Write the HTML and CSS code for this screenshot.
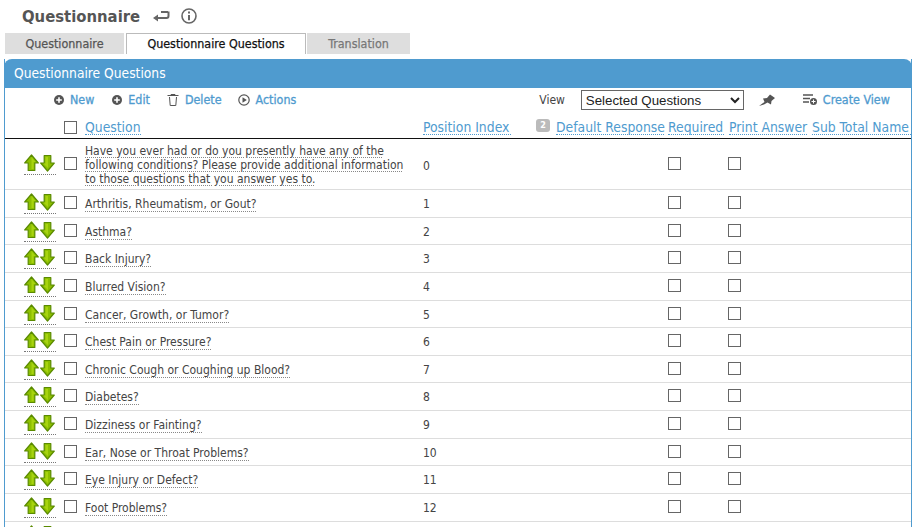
FILE: index.html
```html
<!DOCTYPE html>
<html lang="en">
<head>
<meta charset="utf-8">
<title>Questionnaire</title>
<link rel="stylesheet" href="styles.css">
</head>
<body>
<svg class="defs" width="0" height="0" aria-hidden="true">
  <symbol id="up" viewBox="0 0 15 18"><path d="M7.5 1 14.3 9H10.8V16.5H4.2V9H.7Z" fill="#8cbf00" stroke="#5a8a00" stroke-width="1.2" stroke-linejoin="round"/><path d="M7.5 3 11.5 8H9.6V15H7.5Z" fill="#a8d410"/></symbol>
  <symbol id="down" viewBox="0 0 15 18"><path d="M4.2 1.5H10.8V9H14.3L7.5 17 .7 9H4.2Z" fill="#8cbf00" stroke="#5a8a00" stroke-width="1.2" stroke-linejoin="round"/><path d="M5.5 3H8V14L3.5 9.5H5.5Z" fill="#a8d410"/></symbol>
  <symbol id="plus" viewBox="0 0 10 10"><circle cx="5" cy="5" r="5" fill="#555"/><path d="M5 2.2V7.8M2.2 5H7.8" stroke="#fff" stroke-width="1.6"/></symbol>
</svg>
<header class="title-row">
  <h1 class="title">Questionnaire</h1>
  <svg class="icon-back" width="17" height="13" viewBox="0 0 17 13"><path d="M15.5 1.5V6a2 2 0 0 1-2 2H3" fill="none" stroke="#666" stroke-width="2"/><path d="M0 8 5 4.5V11.5Z" fill="#666"/><path d="M8 2H15" stroke="#666" stroke-width="2"/></svg>
  <svg class="icon-info" width="16" height="16" viewBox="0 0 16 16"><circle cx="8" cy="8" r="7" fill="none" stroke="#666" stroke-width="1.6"/><path d="M8 7V12.2M8 3.6V5.4" stroke="#666" stroke-width="2"/></svg>
</header>
<nav class="tabs">
  <span class="tab tab-first">Questionnaire</span>
  <span class="tab tab-active">Questionnaire Questions</span>
  <span class="tab tab-last">Translation</span>
</nav>
<main class="panel">
  <div class="panel-head">Questionnaire Questions</div>
  <div class="toolbar">
    <a class="tool tool-new"><svg width="10" height="10"><use href="#plus"/></svg>New</a>
    <a class="tool tool-edit"><svg width="10" height="10"><use href="#plus"/></svg>Edit</a>
    <a class="tool tool-delete"><svg width="12" height="12" viewBox="0 0 12 12"><path d="M.5 1.5H11.5M4 1.5V.5H8V1.5M2.5 3 3.2 11.5H8.8L9.5 3" fill="none" stroke="#555"/></svg>Delete</a>
    <a class="tool tool-actions"><svg width="12" height="12" viewBox="0 0 12 12"><circle cx="6" cy="6" r="5.2" fill="none" stroke="#555" stroke-width="1.2"/><path d="M4.5 3.2 8.8 6 4.5 8.8Z" fill="#555"/></svg>Actions</a>
    <span class="view-label">View</span>
    <select class="view-select"><option>Selected Questions</option></select>
    <svg class="pin" width="18" height="14" viewBox="0 0 18 14"><path d="M1 13 6.5 9 5 5.5 9 5 12 1.5 17 5 13.5 8 13 11.5 9.5 9.5 6 11.5Z" fill="#555"/></svg>
    <a class="tool tool-create"><svg width="14" height="11" viewBox="0 0 14 11"><path d="M0 1H10M0 4.5H7M0 8H6" stroke="#555" stroke-width="1.6"/><circle cx="10.5" cy="7.5" r="3.5" fill="#555"/><path d="M10.5 5.5V9.5M8.5 7.5H12.5" stroke="#fff"/></svg>Create View</a>
  </div>
  <div class="table-head">
    <span class="box head-box"></span>
    <a class="col-link col-question">Question</a>
    <a class="col-link col-index">Position Index</a>
    <span class="badge">2</span>
    <a class="col-link col-default">Default Response</a>
    <a class="col-link col-required">Required</a>
    <a class="col-link col-print">Print Answer</a>
    <a class="col-link col-sub">Sub Total Name</a>
  </div>
  <div class="rows">
    <div class="row row-tall"><span class="arrows"><svg width="15" height="18"><use href="#up"/></svg><svg width="15" height="18"><use href="#down"/></svg></span><span class="box"></span><span class="question q-long">Have you ever had or do you presently have any of the following conditions? Please provide additional information to those questions that you answer yes to.</span><span class="pos">0</span><span class="box req"></span><span class="box prn"></span></div>
    <div class="row"><span class="arrows"><svg width="15" height="18"><use href="#up"/></svg><svg width="15" height="18"><use href="#down"/></svg></span><span class="box"></span><span class="question">Arthritis, Rheumatism, or Gout?</span><span class="pos">1</span><span class="box req"></span><span class="box prn"></span></div>
    <div class="row"><span class="arrows"><svg width="15" height="18"><use href="#up"/></svg><svg width="15" height="18"><use href="#down"/></svg></span><span class="box"></span><span class="question">Asthma?</span><span class="pos">2</span><span class="box req"></span><span class="box prn"></span></div>
    <div class="row"><span class="arrows"><svg width="15" height="18"><use href="#up"/></svg><svg width="15" height="18"><use href="#down"/></svg></span><span class="box"></span><span class="question">Back Injury?</span><span class="pos">3</span><span class="box req"></span><span class="box prn"></span></div>
    <div class="row"><span class="arrows"><svg width="15" height="18"><use href="#up"/></svg><svg width="15" height="18"><use href="#down"/></svg></span><span class="box"></span><span class="question">Blurred Vision?</span><span class="pos">4</span><span class="box req"></span><span class="box prn"></span></div>
    <div class="row"><span class="arrows"><svg width="15" height="18"><use href="#up"/></svg><svg width="15" height="18"><use href="#down"/></svg></span><span class="box"></span><span class="question">Cancer, Growth, or Tumor?</span><span class="pos">5</span><span class="box req"></span><span class="box prn"></span></div>
    <div class="row"><span class="arrows"><svg width="15" height="18"><use href="#up"/></svg><svg width="15" height="18"><use href="#down"/></svg></span><span class="box"></span><span class="question">Chest Pain or Pressure?</span><span class="pos">6</span><span class="box req"></span><span class="box prn"></span></div>
    <div class="row"><span class="arrows"><svg width="15" height="18"><use href="#up"/></svg><svg width="15" height="18"><use href="#down"/></svg></span><span class="box"></span><span class="question">Chronic Cough or Coughing up Blood?</span><span class="pos">7</span><span class="box req"></span><span class="box prn"></span></div>
    <div class="row"><span class="arrows"><svg width="15" height="18"><use href="#up"/></svg><svg width="15" height="18"><use href="#down"/></svg></span><span class="box"></span><span class="question">Diabetes?</span><span class="pos">8</span><span class="box req"></span><span class="box prn"></span></div>
    <div class="row"><span class="arrows"><svg width="15" height="18"><use href="#up"/></svg><svg width="15" height="18"><use href="#down"/></svg></span><span class="box"></span><span class="question">Dizziness or Fainting?</span><span class="pos">9</span><span class="box req"></span><span class="box prn"></span></div>
    <div class="row"><span class="arrows"><svg width="15" height="18"><use href="#up"/></svg><svg width="15" height="18"><use href="#down"/></svg></span><span class="box"></span><span class="question">Ear, Nose or Throat Problems?</span><span class="pos">10</span><span class="box req"></span><span class="box prn"></span></div>
    <div class="row"><span class="arrows"><svg width="15" height="18"><use href="#up"/></svg><svg width="15" height="18"><use href="#down"/></svg></span><span class="box"></span><span class="question">Eye Injury or Defect?</span><span class="pos">11</span><span class="box req"></span><span class="box prn"></span></div>
    <div class="row"><span class="arrows"><svg width="15" height="18"><use href="#up"/></svg><svg width="15" height="18"><use href="#down"/></svg></span><span class="box"></span><span class="question">Foot Problems?</span><span class="pos">12</span><span class="box req"></span><span class="box prn"></span></div>
    <div class="row"><span class="arrows"><svg width="15" height="18"><use href="#up"/></svg><svg width="15" height="18"><use href="#down"/></svg></span></div>
  </div>
</main>
</body>
</html>
```
FILE: styles.css
```css
* { box-sizing: border-box; }
html, body { height: 100%; }
body {
  margin: 0;
  overflow: hidden;
  background: #fff;
  color: #444;
  font-family: "DejaVu Sans Condensed", "DejaVu Sans", sans-serif;
  font-size: 12px;
}
.defs { display: block; height: 0; }
.title-row { display: flex; align-items: center; height: 33px; padding: 0 0 1px 22px; }
.title { margin: 0 13px 0 0; font-size: 16.5px; font-weight: bold; color: #555; }
.icon-info { margin-left: 11px; }
.tabs { display: flex; height: 21px; margin-left: 5px; font-size: 12.4px; -webkit-text-stroke: 0.25px currentColor; }
.tab { display: flex; align-items: center; justify-content: center; padding-bottom: 1px; background: #dedede; }
.tab-first { width: 119px; color: #555; }
.tab-active { width: 180px; margin: 0 1px 0 2px; background: #fff; border: 1px solid #bbb; border-bottom: 0; color: #111; }
.tab-last { width: 103px; color: #777; }
.panel {
  width: 908px;
  margin: 5px 0 0 4px;
  border-left: 1px solid #4f9bcf;
  border-right: 1px solid #4f9bcf;
}
.panel-head {
  display: flex;
  align-items: center;
  height: 29px;
  margin: 0 -1px;
  padding: 0 0 1px 10px;
  border-radius: 8px 8px 0 0;
  background: #4f9bcf;
  color: #fff;
  font-size: 13.7px;
}
.toolbar { display: flex; align-items: center; height: 24px; padding-left: 49px; }
.tool { display: inline-flex; align-items: center; gap: 6px; margin-bottom: 1px; color: #4f9bcf; font-size: 12.4px; -webkit-text-stroke: 0.3px currentColor; white-space: nowrap; }
.tool-edit { margin-left: 18px; }
.tool-delete { margin-left: 17px; }
.tool-actions { margin-left: 16px; }
.view-label { margin-left: 243px; color: #444; }
.view-select {
  flex: none;
  width: 163px;
  height: 20px;
  margin-left: 16px;
  padding: 0;
  border: 1px solid #666;
  border-radius: 0;
  background: #fff;
  color: #222;
  font-family: "Liberation Sans", sans-serif;
  font-size: 13.3px;
}
.pin { flex: none; margin-left: 14px; }
.tool-create { margin-left: 27px; }
.table-head {
  display: flex;
  align-items: flex-end;
  height: 27px;
  padding-bottom: 3px;
  border-bottom: 1px solid #111;
  font-size: 13.8px;
  white-space: nowrap;
  overflow: hidden;
}
.box { flex: none; width: 13px; height: 13px; border: 1px solid #666; background: #fff; }
.head-box { margin: 0 0 1px 59px; }
.col-link { flex: none; color: #4f9bcf; border-bottom: 1px dotted #4f9bcf; line-height: 14px; }
.col-question { margin-left: 8px; width: 56px; }
.col-index { margin-left: 282px; width: 88px; }
.badge {
  flex: none;
  width: 14px;
  height: 13px;
  margin: 0 0 3px 25px;
  border-radius: 3px;
  background: #bbb;
  color: #fff;
  font-size: 9px;
  font-weight: bold;
  line-height: 13px;
  text-align: center;
}
.col-default { margin-left: 6px; width: 108px; }
.col-required { margin-left: 4px; width: 56px; }
.col-print { margin-left: 5px; width: 78px; }
.col-sub { margin-left: 5px; width: 99px; }
.row {
  display: flex;
  align-items: flex-start;
  height: 27.64px;
  padding-top: 3px;
  border-bottom: 1px solid #ddd;
}
.row-tall { height: 51px; padding-top: 15px; }
.arrows { flex: none; display: flex; gap: 1px; width: 32px; margin-left: 19px; height: 21px; border-bottom: 1px dotted #777; }
.row .box { margin-left: 8px; margin-top: 3px; }
.question { flex: none; margin-left: 8px; margin-top: 4px; color: #444; line-height: 14px; border-bottom: 1px dotted #888; }
.q-long { width: 330px; margin-top: -10px; border-bottom: 0; text-decoration: underline dotted #888; text-underline-offset: 2px; }
.pos { position: absolute; left: 423px; margin-top: 4px; }
.row-tall .pos { margin-top: 5px; }
.row .req { position: absolute; left: 668px; margin: 3px 0 0; }
.row .prn { position: absolute; left: 728px; margin: 3px 0 0; }
```
